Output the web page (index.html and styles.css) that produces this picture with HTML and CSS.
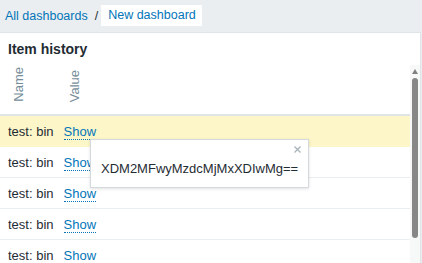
FILE: index.html
```html
<!DOCTYPE html>
<html lang="en">
<head>
    <meta charset="UTF-8">
    <meta name="viewport" content="width=device-width, initial-scale=1.0">
    <title>New dashboard</title>
    <link rel="stylesheet" href="styles.css">
</head>
<body>
    <div class="breadcrumbs">
        <a href="#" class="crumb">All dashboards</a>
        <span class="separator">/</span>
        <span class="crumb current">New dashboard</span>
    </div>

    <div class="widget">
        <div class="widget-head">
            <h4>Item history</h4>
        </div>
        <div class="widget-body">
            <div class="table-wrap">
                <table class="list-table">
                    <thead>
                        <tr>
                            <th class="col-name"><span class="vertical">Name</span></th>
                            <th class="col-value"><span class="vertical">Value</span></th>
                        </tr>
                    </thead>
                    <tbody>
                        <tr class="highlighted">
                            <td class="col-name">test: bin</td>
                            <td class="col-value"><a href="#" class="link-action">Show</a></td>
                        </tr>
                        <tr>
                            <td class="col-name">test: bin</td>
                            <td class="col-value"><a href="#" class="link-action">Show</a></td>
                        </tr>
                        <tr>
                            <td class="col-name">test: bin</td>
                            <td class="col-value"><a href="#" class="link-action">Show</a></td>
                        </tr>
                        <tr>
                            <td class="col-name">test: bin</td>
                            <td class="col-value"><a href="#" class="link-action">Show</a></td>
                        </tr>
                        <tr>
                            <td class="col-name">test: bin</td>
                            <td class="col-value"><a href="#" class="link-action">Show</a></td>
                        </tr>
                        <tr>
                            <td class="col-name">test: bin</td>
                            <td class="col-value"><a href="#" class="link-action">Show</a></td>
                        </tr>
                    </tbody>
                </table>
            </div>
            <div class="scrollbar">
                <span class="scroll-arrow"></span>
                <span class="scroll-thumb"></span>
            </div>
        </div>

        <div class="hintbox">
            <button class="btn-close" title="Close">
                <svg width="7" height="7" viewBox="0 0 7 7">
                    <path d="M0.5 0.5 L6.5 6.5 M6.5 0.5 L0.5 6.5" stroke="#a9b3ba" stroke-width="1.3" fill="none"/>
                </svg>
            </button>
            <div class="hint-text">XDM2MFwyMzdcMjMxXDIwMg==</div>
        </div>
    </div>
</body>
</html>
```

FILE: styles.css
```css
body {
    font-family: "Liberation Sans", Arial, sans-serif;
    font-size: 13px;
    color: #1f2c33;
    margin: 0;
    padding: 0;
    background-color: #ebeef0;
    overflow: hidden;
}
a {
    color: #0275b8;
    text-decoration: none;
}
.breadcrumbs {
    display: flex;
    align-items: center;
    height: 32px;
    padding-left: 5px;
    font-size: 12.5px;
}
.separator {
    color: #1f2c33;
    margin: 0 3px 0 7px;
}
.crumb.current {
    background: #fff;
    color: #0275b8;
    line-height: 21px;
    padding: 0 6px 0 7px;
    margin-top: -1px;
}
.widget {
    position: relative;
    background: #fff;
    border: 1px solid #dfe4e7;
    margin: 0 1px 0 -1px;
}
.widget-head {
    padding: 7px 8px 6px 8px;
}
.widget-head h4 {
    margin: 0;
    font-size: 14px;
    line-height: 18px;
    font-weight: bold;
}
.widget-body {
    display: flex;
}
.table-wrap {
    flex: 1;
}
.list-table {
    width: 100%;
    border-collapse: separate;
    border-spacing: 0;
}
.list-table th {
    height: 41px;
    padding: 0 0 9px 0;
    vertical-align: bottom;
    text-align: left;
    font-weight: normal;
    color: #768d99;
    border-bottom: 2px solid #dfe4e7;
}
.list-table th.col-name {
    padding-left: 11px;
}
.list-table th.col-value {
    padding-left: 3px;
}
.vertical {
    display: inline-block;
    writing-mode: vertical-rl;
    transform: rotate(180deg);
    line-height: 15px;
}
.list-table td {
    padding: 8px 0 7px 0;
    line-height: 15px;
    border-bottom: 1px solid #ebeef0;
    white-space: nowrap;
}
.list-table td.col-name {
    width: 45px;
    padding-left: 8px;
    padding-right: 10px;
}
.list-table tr.highlighted td {
    background: #fcf6c8;
    border-bottom-color: #fcf6c8;
}
.link-action {
    border-bottom: 1px dotted #0275b8;
}
.scrollbar {
    width: 10px;
    display: flex;
    flex-direction: column;
    align-items: center;
    padding-top: 4px;
    margin-top: 1px;
    background: #f7f8f8;
}
.scroll-arrow {
    width: 0;
    height: 0;
    border-left: 3px solid transparent;
    border-right: 3px solid transparent;
    border-bottom: 5px solid #808080;
}
.scroll-thumb {
    width: 6px;
    height: 160px;
    margin-top: 4px;
    border-radius: 3px;
    background: #878787;
}
.hintbox {
    position: absolute;
    left: 90px;
    top: 106px;
    width: 197px;
    padding: 21px 10px 11px 10px;
    background: #fff;
    border: 1px solid #d3d9dd;
    box-shadow: 0 1px 3px rgba(0,0,0,0.12);
}
.hint-text {
    line-height: 15px;
    white-space: nowrap;
}
.btn-close {
    position: absolute;
    top: 6px;
    right: 7px;
    padding: 0;
    border: 0;
    background: none;
    line-height: 0;
}
```
